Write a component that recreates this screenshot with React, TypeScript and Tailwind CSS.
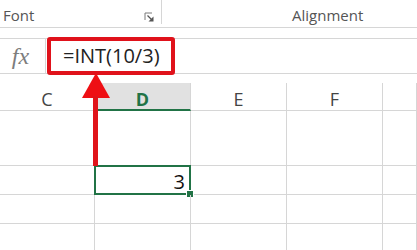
import React from 'react';

const LINE = 'border-[#d6d6d6]';

type Col = { key: string; width: string; selected?: boolean };

const COLS: Col[] = [
  { key: 'C', width: 'w-[95px]' },
  { key: 'D', width: 'w-[96px]', selected: true },
  { key: 'E', width: 'w-[96px]' },
  { key: 'F', width: 'w-[96px]' },
  { key: '', width: 'flex-1' },
];

const ROW_HEIGHTS = ['h-[55px]', 'h-[29px]', 'h-[29px]', 'h-[29px]'];

function Launcher() {
  return (
    <svg width="11" height="10" viewBox="0 0 11 10" className="mt-[12px]">
      <path d="M1 8V1h7" fill="none" stroke="#7a7a7a" strokeWidth="1" />
      <path d="M3.5 3.5l5 5" stroke="#555" strokeWidth="1.2" />
      <path d="M9.5 4.5v5h-5z" fill="#555" />
    </svg>
  );
}

function RedArrow() {
  // annotation drawn over the sheet: arrow pointing from cell D up to the formula
  return (
    <svg
      className="pointer-events-none absolute left-[80px] top-[72px]"
      width="32"
      height="94"
      viewBox="0 0 32 94"
    >
      <polygon points="16,1 2,26 30,26" fill="#ee0f14" />
      <rect x="13" y="24" width="5" height="70" fill="#e0141a" />
    </svg>
  );
}

export default function App() {
  return (
    <div className="relative h-[250px] w-[417px] overflow-hidden bg-white font-['Open_Sans',sans-serif] text-[#444]">
      {/* Ribbon group labels */}
      <div className={`flex h-[28px] border-b ${LINE}`}>
        <div className="flex w-[162px]">
          <span className="pl-[3px] pt-[5px] text-[15px] leading-[20px] text-[#555]">Font</span>
          <div className="ml-auto flex">
            <Launcher />
            <div className={`ml-[6px] mb-[3px] border-r ${LINE}`} />
          </div>
        </div>
        <span className="pl-[130px] pt-[5px] text-[15px] leading-[20px] text-[#555]">Alignment</span>
      </div>

      <div className="h-[10px]" />

      {/* Formula bar */}
      <div className={`flex h-[36px] items-center border-y ${LINE}`}>
        <div className={`flex h-full w-[46px] items-center justify-center border-r ${LINE}`}>
          <span className="pr-[4px] font-['Liberation_Serif',serif] text-[24px] italic leading-none text-[#7d7d7d]">
            fx
          </span>
        </div>
        <div className="ml-[1px] flex h-[38px] w-[128px] items-center rounded-[3px] border-[4px] border-[#e0121b] pl-[12px]">
          <span className="text-[20px] leading-none text-[#222]">=INT(10/3)</span>
        </div>
      </div>

      <div className="h-[9px]" />

      {/* Column headers */}
      <div className={`flex h-[28px] border-b ${LINE}`}>
        {COLS.map((c) => (
          <div
            key={c.key || 'rest'}
            className={`${c.width} flex items-center justify-center border-r ${LINE} pt-[5px] text-[18px] leading-none ${
              c.selected ? '-mb-px border-b-2 border-b-[#217346] bg-[#e1e1e1] font-bold text-[#217346]' : 'text-[#444]'
            }`}
          >
            {c.key}
          </div>
        ))}
      </div>

      {/* Grid rows */}
      {ROW_HEIGHTS.map((h, r) => (
        <div key={r} className={`flex ${h} border-b ${LINE}`}>
          {COLS.map((c) => {
            const active = c.selected && r === 1;
            return (
              <div key={c.key || 'rest'} className={`${c.width} relative flex items-end justify-end border-r ${LINE}`}>
                {active && (
                  <>
                    <span className="pb-[2px] pr-[5px] text-[20px] leading-none text-[#111]">3</span>
                    <div className="pointer-events-none absolute -inset-px border-2 border-[#217346]" />
                    <div className="absolute -bottom-[4px] -right-[4px] h-[8px] w-[8px] border border-white bg-[#217346]" />
                  </>
                )}
              </div>
            );
          })}
        </div>
      ))}

      <RedArrow />
    </div>
  );
}
